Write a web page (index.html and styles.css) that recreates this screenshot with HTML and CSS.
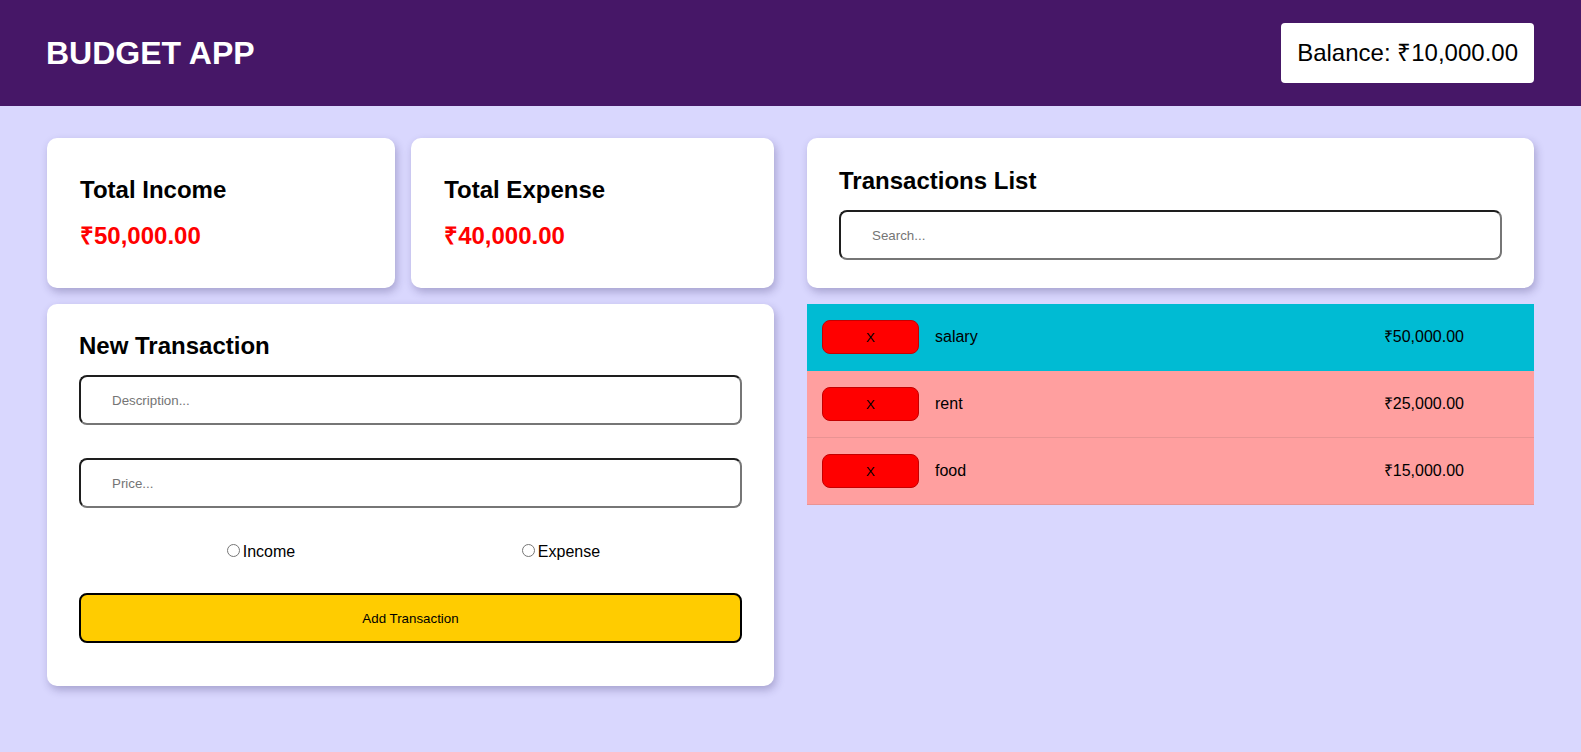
FILE: index.html
```html
<!DOCTYPE html>
<html lang="en">
<head>
<meta charset="utf-8">
<title>Budget App</title>
<link rel="stylesheet" href="styles.css">
</head>
<body>
<header class="topbar">
  <h1 class="brand">BUDGET APP</h1>
  <div class="balance">Balance: ₹10,000.00</div>
</header>
<main class="layout">
  <section class="stats">
    <div class="card stat">
      <h2 class="card-title">Total Income</h2>
      <p class="stat-amount">₹50,000.00</p>
    </div>
    <div class="card stat">
      <h2 class="card-title">Total Expense</h2>
      <p class="stat-amount">₹40,000.00</p>
    </div>
  </section>

  <section class="card search-card">
    <h2 class="card-title">Transactions List</h2>
    <input class="field" type="text" placeholder="Search...">
  </section>

  <section class="card form-card">
    <h2 class="card-title">New Transaction</h2>
    <form class="tx-form">
      <input class="field" type="text" placeholder="Description...">
      <input class="field" type="text" placeholder="Price...">
      <div class="type-row">
        <label class="type-opt"><input type="radio" name="type">Income</label>
        <label class="type-opt"><input type="radio" name="type">Expense</label>
      </div>
      <button class="add-btn" type="button">Add Transaction</button>
    </form>
  </section>

  <ul class="tx-list">
    <li class="tx income"><button class="del-btn" type="button">X</button><span class="tx-desc">salary</span><span class="tx-amt">₹50,000.00</span></li>
    <li class="tx expense"><button class="del-btn" type="button">X</button><span class="tx-desc">rent</span><span class="tx-amt">₹25,000.00</span></li>
    <li class="tx expense"><button class="del-btn" type="button">X</button><span class="tx-desc">food</span><span class="tx-amt">₹15,000.00</span></li>
  </ul>
</main>
</body>
</html>
```

FILE: styles.css
```css
* {
  box-sizing: border-box;
}

html, body {
  margin: 0;
  min-height: 100%;
}

body {
  background: #d9d7fe;
  font-family: "Liberation Sans", Arial, sans-serif;
  color: #000;
  min-height: 752px;
}

.topbar {
  height: 106px;
  background: #461767;
  display: flex;
  align-items: center;
  justify-content: space-between;
  padding: 0 47px 0 46px;
}

.brand {
  margin: 0;
  color: #fff;
  font-size: 32px;
  line-height: 37px;
  font-weight: bold;
}

.balance {
  background: #fff;
  border-radius: 4px;
  padding: 16px;
  font-size: 24px;
  line-height: 28px;
}

.layout {
  display: grid;
  grid-template-columns: 1fr 1fr;
  column-gap: 33px;
  row-gap: 16px;
  padding: 32px 47px;
  align-items: start;
}

.card {
  background: #fff;
  border-radius: 10px;
  box-shadow: 2px 4px 8px rgba(40, 30, 90, 0.28);
}

.card-title {
  margin: 0;
  font-size: 24px;
  line-height: 28px;
  font-weight: bold;
}

.stats {
  display: flex;
  gap: 16px;
}

.stat {
  flex: 1 1 auto;
  padding: 38px 33px;
  display: flex;
  flex-direction: column;
  gap: 18px;
}

.stat-amount {
  margin: 0;
  color: #ff0000;
  font-size: 24px;
  line-height: 28px;
  font-weight: bold;
}

.search-card {
  padding: 29px 32px 28px;
  display: flex;
  flex-direction: column;
  gap: 15px;
}

.field {
  display: block;
  width: 100%;
  height: 50px;
  border-width: 2px;
  border-style: solid;
  border-color: #1e1e1e #767676 #767676 #1e1e1e;
  border-radius: 8px;
  padding: 0 31px;
  font-family: "Liberation Sans", Arial, sans-serif;
  font-size: 13.333px;
  color: #000;
  background: #fff;
}

.field::placeholder {
  color: #757575;
}

.form-card {
  padding: 28px 32px 43px;
}

.tx-form {
  margin-top: 15px;
  display: flex;
  flex-direction: column;
  gap: 33px;
}

.type-row {
  display: flex;
  justify-content: center;
  padding-right: 4px;
  font-size: 16px;
  line-height: 17px;
}

.type-opt {
  width: 300px;
  text-align: center;
}

.type-opt input {
  margin: 3px 3px 0 5px;
}

.add-btn {
  height: 50px;
  width: 100%;
  background: #ffcc00;
  border: 2px solid #000;
  border-radius: 8px;
  font-family: "Liberation Sans", Arial, sans-serif;
  font-size: 13.333px;
  color: #000;
}

.tx-list {
  list-style: none;
  margin: 0;
  padding: 0;
}

.tx {
  display: flex;
  align-items: center;
  gap: 16px;
  padding: 16px 70px 16px 15px;
  font-size: 16px;
  line-height: 18px;
}

.tx.income {
  background: #00bbd3;
  border-bottom: 1px solid #00bbd3;
}

.tx.expense {
  background: #ff9f9f;
  border-bottom: 1px solid #e99393;
}

.del-btn {
  width: 97px;
  height: 34px;
  background: #ff0000;
  border: 1px solid #c40000;
  border-radius: 8px;
  font-family: "Liberation Sans", Arial, sans-serif;
  font-size: 13.333px;
  color: #000;
  padding: 0;
}

.tx-desc {
  flex: 1;
}
```
